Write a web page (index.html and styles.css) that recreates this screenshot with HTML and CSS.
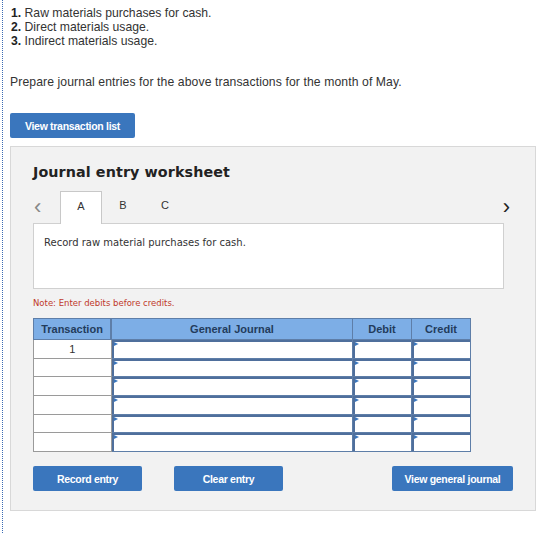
FILE: index.html
```html
<!DOCTYPE html>
<html lang="en">
<head>
    <meta charset="UTF-8">
    <meta name="viewport" content="width=device-width, initial-scale=1.0">
    <title>Journal entry worksheet</title>
    <link rel="stylesheet" href="styles.css">
</head>
<body>
    <div class="question">
        <ol class="steps">
            <li><b>1.</b> Raw materials purchases for cash.</li>
            <li><b>2.</b> Direct materials usage.</li>
            <li><b>3.</b> Indirect materials usage.</li>
        </ol>

        <p class="prompt">Prepare journal entries for the above transactions for the month of May.</p>

        <button class="btn btn-list">View transaction list</button>

        <div class="worksheet">
            <h2>Journal entry worksheet</h2>

            <div class="tabs">
                <span class="arrow">&lsaquo;</span>
                <span class="tab active">A</span>
                <span class="tab">B</span>
                <span class="tab">C</span>
                <span class="arrow arrow-next">&rsaquo;</span>
            </div>

            <div class="task-box">Record raw material purchases for cash.</div>

            <div class="note">Note: Enter debits before credits.</div>

            <table class="journal">
                <thead>
                    <tr>
                        <th class="col-trans">Transaction</th>
                        <th class="col-gj">General Journal</th>
                        <th class="col-amt">Debit</th>
                        <th class="col-amt">Credit</th>
                    </tr>
                </thead>
                <tbody>
                    <tr>
                        <td class="trans">1</td>
                        <td class="entry"><div class="cell"></div></td>
                        <td class="entry"><div class="cell"></div></td>
                        <td class="entry"><div class="cell"></div></td>
                    </tr>
                    <tr>
                        <td class="trans"></td>
                        <td class="entry"><div class="cell"></div></td>
                        <td class="entry"><div class="cell"></div></td>
                        <td class="entry"><div class="cell"></div></td>
                    </tr>
                    <tr>
                        <td class="trans"></td>
                        <td class="entry"><div class="cell"></div></td>
                        <td class="entry"><div class="cell"></div></td>
                        <td class="entry"><div class="cell"></div></td>
                    </tr>
                    <tr>
                        <td class="trans"></td>
                        <td class="entry"><div class="cell"></div></td>
                        <td class="entry"><div class="cell"></div></td>
                        <td class="entry"><div class="cell"></div></td>
                    </tr>
                    <tr>
                        <td class="trans"></td>
                        <td class="entry"><div class="cell"></div></td>
                        <td class="entry"><div class="cell"></div></td>
                        <td class="entry"><div class="cell"></div></td>
                    </tr>
                    <tr>
                        <td class="trans"></td>
                        <td class="entry"><div class="cell"></div></td>
                        <td class="entry"><div class="cell"></div></td>
                        <td class="entry"><div class="cell"></div></td>
                    </tr>
                </tbody>
            </table>

            <div class="actions">
                <button class="btn btn-record">Record entry</button>
                <button class="btn btn-clear">Clear entry</button>
                <button class="btn btn-view">View general journal</button>
            </div>
        </div>
    </div>
</body>
</html>
```

FILE: styles.css
```css
body {
    margin: 0;
    background: #fff;
    color: #333;
    font-family: 'Liberation Sans', Arial, sans-serif;
}

.question {
    margin-left: 2px;
    border-left: 1px dotted #3b6cb4;
    padding: 6px 0 22px 7px;
    min-height: 505px;
}

.steps {
    list-style: none;
    margin: 0;
    padding: 0 0 0 1px;
    font-size: 12.2px;
    line-height: 14px;
}

.steps b {
    color: #222;
}

.prompt {
    margin: 27px 0 0 0;
    font-size: 12.2px;
    line-height: 14px;
    letter-spacing: 0.1px;
}

.btn {
    background: #3a76bd;
    color: #fff;
    border: none;
    border-radius: 2px;
    height: 25px;
    padding: 0;
    font-family: 'Liberation Sans', Arial, sans-serif;
    font-size: 10.5px;
    font-weight: bold;
    letter-spacing: -0.3px;
    cursor: pointer;
}

.btn-list {
    display: block;
    margin: 24px 0 0 0;
    width: 125px;
}

.worksheet {
    margin-top: 8px;
    width: 502px;
    background: #f2f2f2;
    border: 1px solid #d8d8d8;
    padding: 0 0 19px 22px;
}

.worksheet h2 {
    margin: 0;
    padding-top: 16px;
    font-family: 'DejaVu Sans', Verdana, sans-serif;
    font-size: 14.3px;
    line-height: 18px;
    color: #222;
    letter-spacing: 0.1px;
}

.tabs {
    display: flex;
    align-items: flex-end;
    margin-top: 9px;
    height: 33px;
    width: 477px;
    font-family: 'Liberation Sans', Arial, sans-serif;
    font-size: 11px;
    color: #333;
}

.arrow {
    width: 26px;
    padding-left: 1px;
    align-self: center;
    font-size: 22px;
    line-height: 20px;
    color: #888;
}

.arrow-next {
    margin-left: auto;
    width: auto;
    color: #222;
}

.tab {
    width: 40px;
    height: 32px;
    line-height: 28px;
    text-align: center;
    border: 1px solid transparent;
    border-bottom: none;
}

.tab.active {
    background: #fff;
    border-color: #c8c8c8;
    position: relative;
    top: 1px;
}

.task-box {
    width: 459px;
    height: 51px;
    background: #fff;
    border: 1px solid #d0d0d0;
    padding: 13px 0 0 10px;
    font-family: 'DejaVu Sans', Verdana, sans-serif;
    font-size: 10px;
    color: #333;
}

.note {
    margin-top: 9px;
    font-family: 'DejaVu Sans', Verdana, sans-serif;
    font-size: 8.5px;
    color: #c0392b;
}

.journal {
    margin-top: 10px;
    border-collapse: collapse;
    font-family: 'Liberation Sans', Arial, sans-serif;
    font-size: 11px;
}

.journal th {
    height: 20px;
    padding: 0;
    background: #7daee6;
    color: #233c5c;
    font-weight: bold;
    border: 1px solid #5e7ea8;
}

.col-trans {
    width: 76px;
    border-right-width: 2px !important;
}

.col-gj {
    width: 240px;
}

.col-amt {
    width: 58px;
}

.journal td {
    padding: 0;
    height: 17px;
}

.trans {
    background: #fff;
    border: 1px solid #9a9a9a;
    text-align: center;
    color: #333;
}

.entry {
    border-right: 1px solid #5e7ea8;
    border-bottom: 1px solid #5e7ea8;
}

.cell {
    position: relative;
    height: 15.7px;
    background: #fff;
    border-top: 2px solid #4f6f9c;
    border-left: 2px solid #4f6f9c;
}

/* little pointer in the corner of each input */
.cell::before {
    content: "";
    position: absolute;
    left: 0;
    top: 0;
    border-top: 2.5px solid transparent;
    border-bottom: 2.5px solid transparent;
    border-left: 4px solid #3a76bd;
}

.actions {
    display: flex;
    margin-top: 14px;
    width: 480px;
}

.btn-record,
.btn-clear {
    width: 109px;
}

.btn-clear {
    margin-left: 32px;
}

.btn-view {
    width: 121px;
    margin-left: auto;
}
```
